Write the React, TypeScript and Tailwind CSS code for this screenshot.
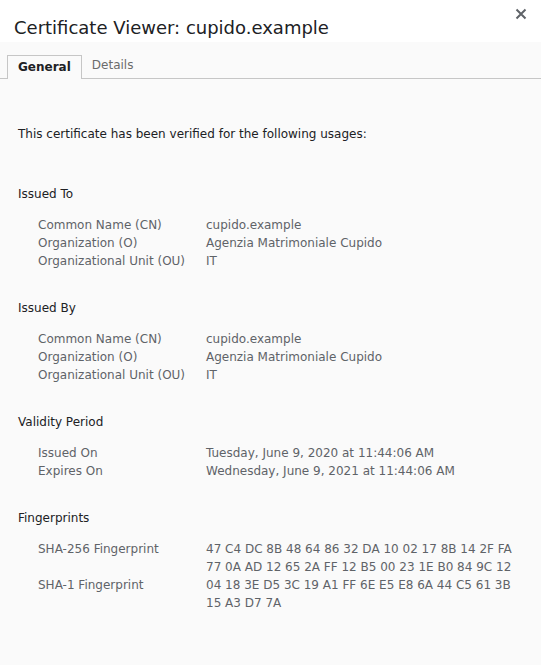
import React from "react";

type Row = { label: string; value: string[] };
type Section = { title: string; rows: Row[] };

const sections: Section[] = [
  {
    title: "Issued To",
    rows: [
      { label: "Common Name (CN)", value: ["cupido.example"] },
      { label: "Organization (O)", value: ["Agenzia Matrimoniale Cupido"] },
      { label: "Organizational Unit (OU)", value: ["IT"] },
    ],
  },
  {
    title: "Issued By",
    rows: [
      { label: "Common Name (CN)", value: ["cupido.example"] },
      { label: "Organization (O)", value: ["Agenzia Matrimoniale Cupido"] },
      { label: "Organizational Unit (OU)", value: ["IT"] },
    ],
  },
  {
    title: "Validity Period",
    rows: [
      { label: "Issued On", value: ["Tuesday, June 9, 2020 at 11:44:06 AM"] },
      { label: "Expires On", value: ["Wednesday, June 9, 2021 at 11:44:06 AM"] },
    ],
  },
  {
    title: "Fingerprints",
    rows: [
      {
        label: "SHA-256 Fingerprint",
        value: [
          "47 C4 DC 8B 48 64 86 32 DA 10 02 17 8B 14 2F FA",
          "77 0A AD 12 65 2A FF 12 B5 00 23 1E B0 84 9C 12",
        ],
      },
      {
        label: "SHA-1 Fingerprint",
        value: ["04 18 3E D5 3C 19 A1 FF 6E E5 E8 6A 44 C5 61 3B", "15 A3 D7 7A"],
      },
    ],
  },
];

export default function App() {
  return (
    <div className="w-[541px] h-[665px] flex flex-col bg-[#fafafa] font-['DejaVu_Sans',sans-serif] overflow-hidden">
      {/* header */}
      <div className="h-[42px] bg-white flex items-start justify-between pl-[14px] pr-[10px]">
        <h1 className="text-[18px] leading-[18px] mt-[19px] text-[#202124]">Certificate Viewer: cupido.example</h1>
        <svg width="12" height="12" viewBox="0 0 12 12" className="mt-[8px] mr-[4px]">
          <path d="M1.5 1.5 L10.5 10.5 M10.5 1.5 L1.5 10.5" stroke="#5f6368" strokeWidth="2" />
        </svg>
      </div>

      {/* tabs */}
      <div className="mt-[13px] flex items-end border-b border-[#c6c6c6] pl-[7px] h-[24px]">
        <div className="h-[24px] px-[10px] pb-[2px] flex items-center border border-b-0 border-[#c6c6c6] bg-[#fafafa] -mb-px text-[12px] font-bold text-[#202124]">
          General
        </div>
        <div className="h-[24px] pl-[10px] pr-[11px] pb-[2px] flex items-center text-[12px] text-[#6b6b6b]">Details</div>
      </div>

      <div className="pl-[18px] pr-[20px] text-[12px] leading-[18px]">
        <p className="mt-[46px] text-[#202124]">This certificate has been verified for the following usages:</p>

        <div className="mt-[42px] flex flex-col gap-[29px]">
          {sections.map((s) => (
            <div key={s.title}>
              <div className="text-[#202124]">{s.title}</div>
              <div className="mt-[13px] pl-[20px]">
                {s.rows.map((r, i) => (
                  <div key={i} className="flex text-[#5f6368]">
                    <div className="w-[168px] shrink-0">{r.label}</div>
                    <div>
                      {r.value.map((v, j) => (
                        <div key={j}>{v}</div>
                      ))}
                    </div>
                  </div>
                ))}
              </div>
            </div>
          ))}
        </div>
      </div>
    </div>
  );
}
